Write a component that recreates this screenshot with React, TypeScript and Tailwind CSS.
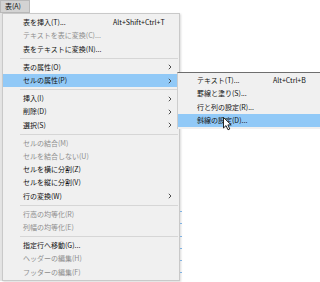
type Item = { label: string; shortcut?: string; disabled?: boolean; sub?: boolean; active?: boolean } | "sep";

const mainItems: Item[] = [
    { label: "表を挿入(T)...", shortcut: "Alt+Shift+Ctrl+T" },
    { label: "テキストを表に変換(C)...", disabled: true },
    { label: "表をテキストに変換(N)..." },
    "sep",
    { label: "表の属性(O)", sub: true },
    { label: "セルの属性(P)", sub: true, active: true },
    "sep",
    { label: "挿入(I)", sub: true },
    { label: "削除(D)", sub: true },
    { label: "選択(S)", sub: true },
    "sep",
    { label: "セルの結合(M)", disabled: true },
    { label: "セルを結合しない(U)", disabled: true },
    { label: "セルを横に分割(Z)" },
    { label: "セルを縦に分割(V)" },
    { label: "行の変換(W)", sub: true },
    "sep",
    { label: "行高の均等化(R)", disabled: true },
    { label: "列幅の均等化(E)", disabled: true },
    "sep",
    { label: "指定行へ移動(G)..." },
    { label: "ヘッダーの編集(H)", disabled: true },
    { label: "フッターの編集(F)", disabled: true },
];

const subItems: Item[] = [
    { label: "テキスト(T)...", shortcut: "Alt+Ctrl+B" },
    { label: "罫線と塗り(S)..." },
    { label: "行と列の設定(R)..." },
    { label: "斜線の設定(D)...", active: true },
];

const Chevron = () => (
    <svg width="4" height="6" viewBox="0 0 4 6" className="shrink-0">
        <path d="M0.8 0.8 L3 3 L0.8 5.2" fill="none" stroke="#3a3a3a" strokeWidth="0.9" />
    </svg>
);

const Row = ({ item, pl, labelW }: { item: Exclude<Item, "sep">; pl: string; labelW: string }) => (
    <div
        className={`flex items-center h-[13.3px] pr-[7px] ${pl} ${item.active ? "bg-[#91c9f7]" : ""} ${item.disabled ? "text-[#8e8e8e]" : "text-[#111]"}`}
    >
        <span className={`${labelW} shrink-0 whitespace-nowrap`}>{item.label}</span>
        {item.shortcut && <span className="whitespace-nowrap">{item.shortcut}</span>}
        {item.sub && <span className="ml-auto"><Chevron /></span>}
    </div>
);

const App = () => {
    return <div className="relative w-[320px] h-[282px] overflow-hidden bg-white font-['Noto_Sans_CJK_JP',sans-serif] text-[7px] leading-none">
        <div className="flex h-[13px]">
            <div className="w-[30px] h-[13px] bg-[#d3d3d3] border border-[#b9b9b9] flex items-center pl-[4px] text-[#111]">
                表(A)
            </div>
        </div>
        <div className="flex">
            <div className="w-[2px] h-[268px] bg-[#e4e4e4]" />
            <div className="w-[178px] h-[268px] border border-[#c9c9c9] bg-[#f0f0f0] pt-[2px] flex flex-col shadow-[1px_1px_2px_rgba(0,0,0,0.15)]">
                {mainItems.map((item, i) =>
                    item === "sep" ? (
                        <div key={i} className="h-[4.7px] flex items-center pl-[17px] pr-[1px]">
                            <div className="h-px flex-1 bg-[#d6d6d6]" />
                        </div>
                    ) : (
                        <Row key={i} item={item} pl="pl-[20px]" labelW="w-[90px]" />
                    )
                )}
            </div>
            <div className="flex flex-col gap-[11.3px] pt-[198px]">
                {[0, 1, 2, 3, 4, 5].map((n) => (
                    <div key={n} className="w-[2px] h-px bg-[#7fb2e2]" />
                ))}
            </div>
        </div>

        {/* submenu */}
        <div className="absolute left-[177px] top-[72px] w-[146px] bg-[#f0f0f0] border-t border-t-[#6e6e6e] border-l border-l-[#cdcdcd] pt-[1px] pb-[2px] flex flex-col">
            {subItems.map((item, i) =>
                item === "sep" ? null : <Row key={i} item={item} pl="pl-[19px]" labelW="w-[76px]" />
            )}
        </div>

        {/* cursor */}
        <svg width="10" height="14" viewBox="0 0 10 14" className="absolute left-[223px] top-[117px]">
            <path d="M0.5 0.5 L0.5 11 L3 8.6 L5 12.8 L6.8 12 L4.9 7.9 L8.2 7.9 Z" fill="#fff" stroke="#111" strokeWidth="0.9" strokeLinejoin="round" />
        </svg>
    </div>
}

export default App
